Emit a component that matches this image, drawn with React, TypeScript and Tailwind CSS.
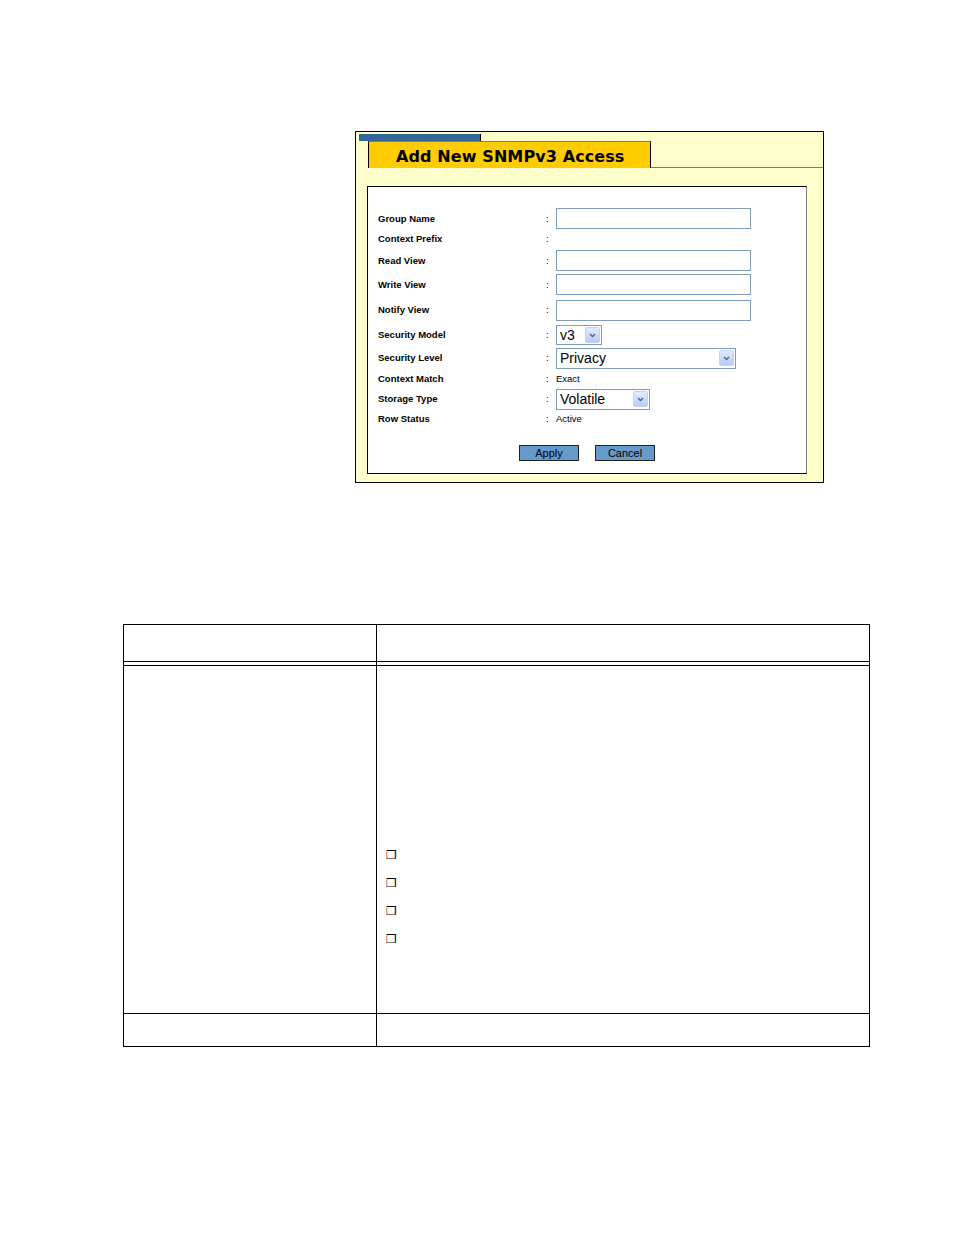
import React from 'react';

const labelFont = { fontFamily: '"Liberation Sans", Arial, sans-serif' };

function TextBox({ width = 'w-[195px]' }: { width?: string }) {
  return <div className={`${width} h-[21px] bg-white border border-[#7f9db9]`} />;
}

function Chevron() {
  return (
    <div className="w-[15px] h-[16px] flex items-center justify-center bg-gradient-to-b from-[#e1eaff] to-[#b7cbf5] border border-[#c3d3fd] rounded-[2px]">
      <svg width="7" height="5" viewBox="0 0 7 5">
        <path d="M1 1 L3.5 3.5 L6 1" fill="none" stroke="#4d6185" strokeWidth="1.3" />
      </svg>
    </div>
  );
}

function Select({ value, width, height = 'h-[21px]' }: { value: string; width: string; height?: string }) {
  return (
    <div className={`${width} ${height} bg-white border border-[#7f9db9] flex items-center justify-between pl-[3px] pr-[1px]`}>
      <span className="text-[14px] leading-none text-black" style={labelFont}>
        {value}
      </span>
      <Chevron />
    </div>
  );
}

type Row = { label: string; h: string; field: React.ReactNode };

const rows: Row[] = [
  { label: 'Group Name', h: 'h-[21px]', field: <TextBox /> },
  { label: 'Context Prefix', h: 'h-[20px]', field: null },
  { label: 'Read View', h: 'h-[23px]', field: <TextBox /> },
  { label: 'Write View', h: 'h-[25px]', field: <TextBox /> },
  { label: 'Notify View', h: 'h-[26px]', field: <TextBox /> },
  { label: 'Security Model', h: 'h-[24px]', field: <Select value="v3" width="w-[46px]" height="h-[20px]" /> },
  { label: 'Security Level', h: 'h-[22px]', field: <Select value="Privacy" width="w-[180px]" /> },
  { label: 'Context Match', h: 'h-[20px]', field: <span className="text-[9.5px]">Exact</span> },
  { label: 'Storage Type', h: 'h-[20px]', field: <Select value="Volatile" width="w-[94px]" /> },
  { label: 'Row Status', h: 'h-[20px]', field: <span className="text-[9.5px]">Active</span> },
];

function AccessPanel() {
  return (
    <div className="ml-[355px] w-[469px] h-[352px] border border-black bg-[#ffffcc] flex flex-col">
      {/* tab strip */}
      <div className="ml-[3px] mt-[2px] w-[122px] h-[7px] bg-[#336699] border-r border-black" />
      <div className="flex items-end">
        <div className="ml-[12px] w-[283px] h-[27px] bg-[#ffcc00] border-l border-r border-black border-t border-t-[#808060] flex items-center pl-[27px] pt-[4px]">
          <span
            className="text-[16px] font-bold text-black leading-none tracking-[0.1px]"
            style={{ fontFamily: '"DejaVu Sans", Verdana, sans-serif' }}
          >
            Add New SNMPv3 Access
          </span>
        </div>
        <div className="flex-1 h-px bg-[#808060]" />
      </div>

      {/* form box */}
      <div
        className="mt-[18px] ml-[11px] w-[440px] h-[288px] bg-white border border-black border-r-[#808080] pt-[21px] flex flex-col text-black"
        style={labelFont}
      >
        {rows.map((r) => (
          <div key={r.label} className={`flex items-center ${r.h}`}>
            <div className="w-[178px] pl-[10px] text-[9.5px] font-bold leading-none">{r.label}</div>
            <div className="w-[10px] text-[9.5px] leading-none">:</div>
            <div className="flex items-center">{r.field}</div>
          </div>
        ))}
        <div className="mt-[16px] flex justify-center gap-[16px]">
          <button className="w-[60px] h-[16px] bg-[#6699cc] border border-[#222] text-[11px] leading-none text-black">
            Apply
          </button>
          <button className="w-[60px] h-[16px] bg-[#6699cc] border border-[#222] text-[11px] leading-none text-black">
            Cancel
          </button>
        </div>
      </div>
    </div>
  );
}

function Bullet() {
  return (
    <div className="h-[28px] flex items-center">
      <span className="text-[12px] leading-none text-black" style={{ fontFamily: '"DejaVu Sans", sans-serif' }}>
        ❒
      </span>
    </div>
  );
}

function DescriptionTable() {
  return (
    <div className="ml-[123px] w-[747px] border border-black flex flex-col">
      <div className="flex h-[37px] border-b border-black">
        <div className="w-[253px] border-r border-black" />
        <div className="flex-1" />
      </div>
      <div className="flex h-[4px] border-b border-black">
        <div className="w-[253px] border-r border-black" />
        <div className="flex-1" />
      </div>
      <div className="flex h-[348px] border-b border-black">
        <div className="w-[253px] border-r border-black" />
        <div className="flex-1 pt-[175px] pl-[9px] flex flex-col">
          <Bullet />
          <Bullet />
          <Bullet />
          <Bullet />
        </div>
      </div>
      <div className="flex h-[32px]">
        <div className="w-[253px] border-r border-black" />
        <div className="flex-1" />
      </div>
    </div>
  );
}

export default function App() {
  return (
    <div className="w-[954px] min-h-[1235px] bg-white pt-[131px]">
      <AccessPanel />
      <div className="h-[141px]" />
      <DescriptionTable />
    </div>
  );
}
